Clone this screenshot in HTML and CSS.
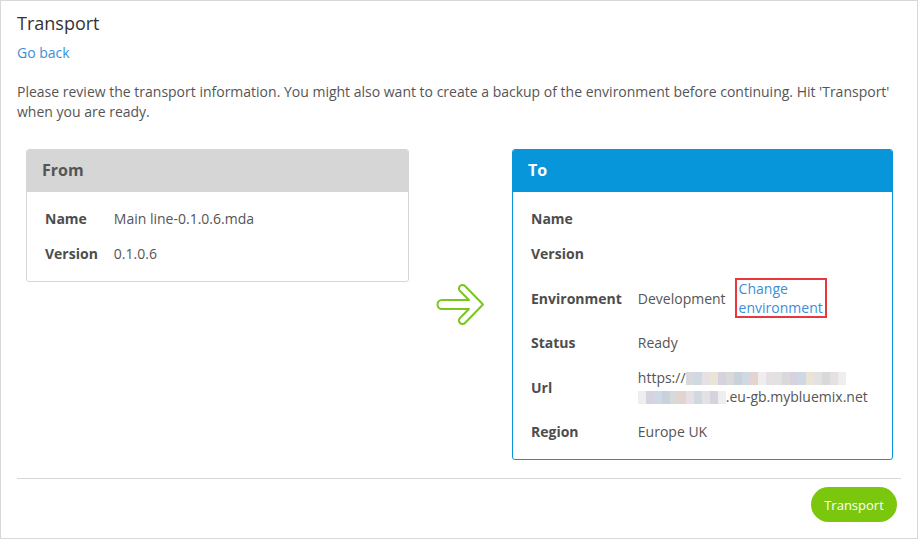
FILE: index.html
```html
<!DOCTYPE html>
<html lang="en">
<head>
<meta charset="utf-8">
<title>Transport</title>
<link rel="stylesheet" href="styles.css">
</head>
<body>
<div class="page">
  <h1 class="title">Transport</h1>
  <a class="back" href="#">Go back</a>
  <p class="intro">Please review the transport information. You might also want to create a backup of the environment before continuing. Hit 'Transport' when you are ready.</p>

  <div class="transfer">
    <section class="panel from">
      <div class="panel-head">From</div>
      <div class="panel-body">
        <div class="label">Name</div><div class="value">Main line-0.1.0.6.mda</div>
        <div class="label">Version</div><div class="value">0.1.0.6</div>
      </div>
    </section>

    <div class="arrow">
      <svg width="50" height="46" viewBox="0 0 50 46">
        <path d="M6,18 L33,18 L24,9 A3.5,3.5 0 0 1 29,4 L47,22.5 L29,41 A3.5,3.5 0 0 1 24,36 L33,27 L6,27 A4.5,4.5 0 0 1 6,18 Z" fill="none" stroke="#7cc520" stroke-width="2" stroke-linejoin="round"/>
      </svg>
    </div>

    <section class="panel to">
      <div class="panel-head">To</div>
      <div class="panel-body">
        <div class="label">Name</div><div class="value"></div>
        <div class="label">Version</div><div class="value"></div>
        <div class="label">Environment</div>
        <div class="value env">Development <a class="change" href="#">Change<br>environment</a></div>
        <div class="label">Status</div><div class="value">Ready</div>
        <div class="label">Url</div>
        <div class="value url">https://<span class="blur w1"><i class="c1"></i><i class="c2"></i><i class="c3"></i><i class="c4"></i><i class="c5"></i><i class="c1"></i><i class="c6"></i><i class="c2"></i><i class="c7"></i><i class="c0"></i><i class="c3"></i><i class="c8"></i><i class="c1"></i><i class="c5"></i><i class="c2"></i><i class="c4"></i><i class="c8"></i><i class="c1"></i><i class="c3"></i><i class="c0"></i></span><br><span class="blur w2"><i class="c0"></i><i class="c5"></i><i class="c2"></i><i class="c6"></i><i class="c1"></i><i class="c7"></i><i class="c3"></i><i class="c2"></i><i class="c8"></i><i class="c5"></i><i class="c0"></i></span>.eu-gb.mybluemix.net</div>
        <div class="label">Region</div><div class="value">Europe UK</div>
      </div>
    </section>
  </div>

  <div class="footer">
    <button class="btn" type="button">Transport</button>
  </div>
</div>
</body>
</html>
```

FILE: styles.css
```css
* { box-sizing: border-box; }

html, body {
  margin: 0;
  padding: 0;
  background: #fff;
}

body {
  font-family: "Open Sans", "Noto Sans", sans-serif;
  font-size: 14px;
  color: #555;
}

.page {
  width: 918px;
  height: 539px;
  border: 1px solid #d8d8d8;
  padding: 10px 16px 0 16px;
}

.title {
  margin: 0;
  font-size: 18px;
  font-weight: 400;
  line-height: 24px;
  color: #333;
}

.back {
  display: block;
  width: max-content;
  margin-top: 8px;
  line-height: 20px;
  color: #3a8fd9;
  text-decoration: none;
}

.intro {
  margin: 19px 0 0 0;
  line-height: 20px;
}

.transfer {
  display: flex;
  align-items: flex-start;
  margin-top: 27px;
  padding: 0 8px 0 9px;
}

.panel {
  border: 1px solid #d6d6d6;
  border-radius: 3px;
  overflow: hidden;
}

.from { width: 383px; }

.to {
  width: 381px;
  border-color: #0796d9;
}

.panel-head {
  height: 42px;
  line-height: 41px;
  padding: 0 15px;
  font-size: 16px;
  font-weight: 700;
  background: #d6d6d6;
  color: #555;
}

.to .panel-head {
  background: #0796d9;
  color: #fff;
}

.panel-body {
  display: grid;
  grid-template-columns: auto 1fr;
  align-items: center;
  padding: 9px 10px 10px 10px;
}

.label, .value {
  padding: 8px;
  line-height: 19px;
  min-height: 35px;
}

.label {
  font-weight: 700;
  color: #4d4d4d;
}

.value { color: #555; }

.env {
  display: flex;
  align-items: center;
  gap: 10px;
}

.change {
  display: inline-block;
  line-height: 19px;
  color: #3a8fd9;
  text-decoration: none;
  outline: 2px solid #e8383d;
  outline-offset: -1px;
  padding: 0 3px 0 3px;
}

.arrow {
  flex: 1;
  align-self: center;
  display: flex;
  justify-content: center;
  padding-top: 1px;
  padding-left: 1px;
}

.arrow svg { display: block; }

.blur {
  display: inline-flex;
  vertical-align: -2px;
  height: 13px;
}

.blur i {
  display: block;
  width: 8px;
  height: 13px;
}

.c0 { background: #eeeeee; }
.c1 { background: #d9d9d9; }
.c2 { background: #cfd9e3; }
.c3 { background: #e6dfe3; }
.c4 { background: #e9e4d6; }
.c5 { background: #d6d2de; }
.c6 { background: #c9d1da; }
.c7 { background: #e3d4d0; }
.c8 { background: #e2e2e2; }

.footer {
  margin-top: 18px;
  border-top: 1px solid #d6d6d6;
  padding-top: 8px;
  display: flex;
  justify-content: flex-end;
  padding-right: 4px;
}

.btn {
  height: 35px;
  width: 86px;
  border: none;
  border-radius: 18px;
  background: #7ac70d;
  color: #fff;
  font-family: "Open Sans", "Noto Sans", sans-serif;
  font-size: 13px;
  padding: 0;
  cursor: pointer;
}
```
